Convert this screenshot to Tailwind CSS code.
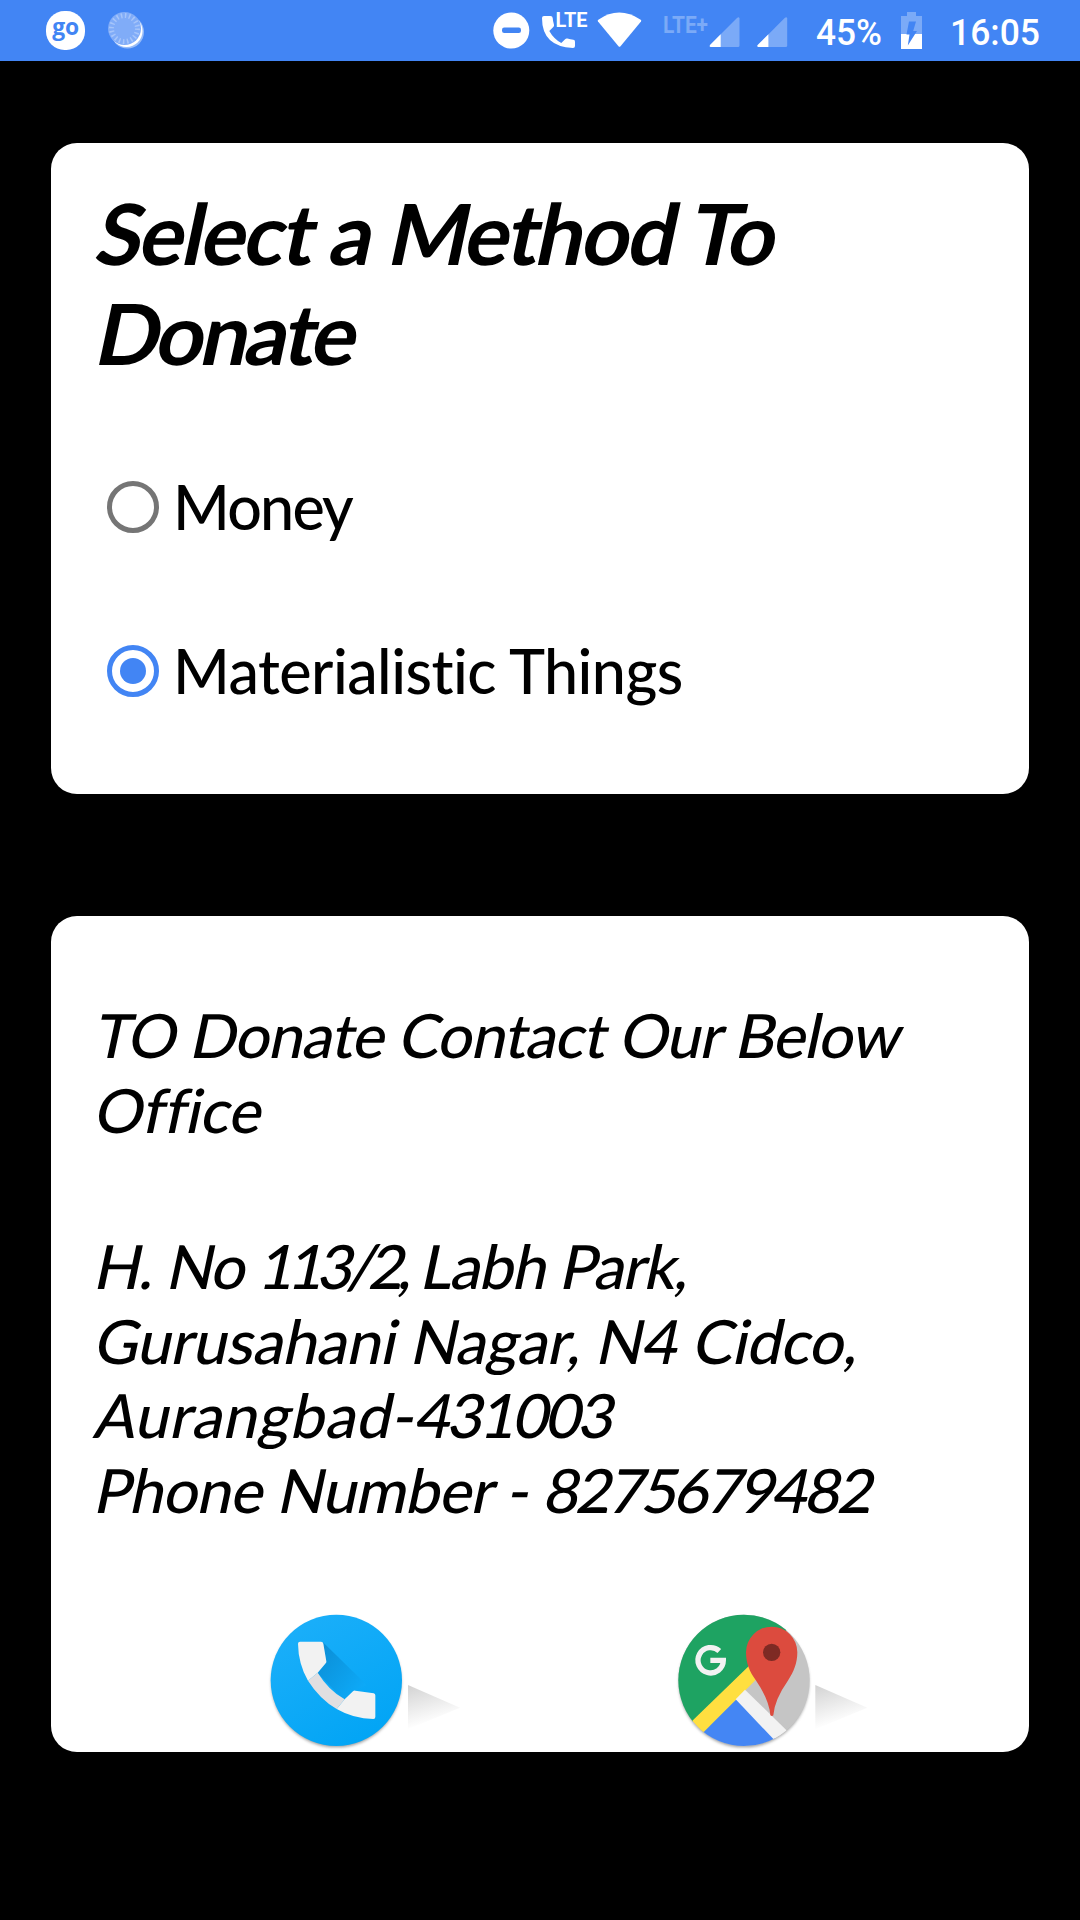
<!DOCTYPE html>
<html lang="en">
<head>
<meta charset="utf-8">
<title>Donate</title>
<script src="https://cdn.jsdelivr.net/npm/@tailwindcss/browser@4"></script>
</head>
<body class="w-[1080px] h-[1920px] overflow-hidden bg-black text-black font-['Lato',sans-serif]">
<header class="h-[61px] bg-[#4285f4]">
<svg class="block" width="1080" height="61" viewBox="0 0 1080 61" fill="#fff">
  <!-- notifications -->
  <rect x="46" y="11" width="39" height="39" rx="18.5"/>
  <text x="65.7" y="34.5" text-anchor="middle" font-family="Open Sans, sans-serif" font-weight="700" font-size="23" textLength="27" lengthAdjust="spacingAndGlyphs" fill="#4285f4">go</text>
  <circle cx="127.5" cy="32" r="16.5" opacity=".45"/>
  <circle cx="126.5" cy="31" r="16"/>
  <circle cx="124.5" cy="28.5" r="16.5" fill="#80acf8"/>
  <circle cx="124.5" cy="28.5" r="13" fill="none" stroke="#a6c5fa" stroke-width="5" stroke-dasharray="1.5 2.584"/>
  <!-- do not disturb -->
  <circle cx="511.3" cy="30.5" r="18"/>
  <rect x="502" y="27.5" width="19" height="5.5" rx="2.2" fill="#4285f4"/>
  <!-- call over LTE -->
  <path d="M544 16h6.500q2 0 2.200 2 .2 3.500 1.300 6.800.3 1.300-.7 2.300l-4 4q4.500 8 12 12l3.800-3.900q1-1 2.300-.6 3 1 6 1.200 1.600.2 1.600 2V46q0 2-2 2Q542 46.500 542 18q0-2 2-2Z"/>
  <text x="555.5" y="27" font-family="Roboto, sans-serif" font-weight="700" font-size="19.5" textLength="32" lengthAdjust="spacingAndGlyphs">LTE</text>
  <path d="M598 21.500q-.8-1 .3-1.800Q619 5.500 640.700 19.700q1 .8.300 1.800L620.500 46.200q-1 1.200-2 0Z"/>
  <!-- mobile signal -->
  <text x="663" y="32.7" font-family="Roboto, sans-serif" font-weight="700" font-size="24" textLength="45" lengthAdjust="spacingAndGlyphs" fill="#7baaf7">LTE+</text>
  <path d="M710.500 47q-1.500-.5-.5-2L737 18q2-1.500 2.500.5V45.500q0 1.500-1.500 1.500Z" fill="#7baaf7"/>
  <path d="M710.500 47q-1.500-.5-.5-2L720.700 34.300V47Z"/>
  <path d="M758.200 47q-1.500-.5-.5-2L784.700 18q2-1.500 2.500.5V45.500q0 1.500-1.500 1.500Z" fill="#7baaf7"/>
  <path d="M758.200 47q-1.500-.5-.5-2L768.400 34.300V47Z"/>
  <text x="816" y="45" font-family="Roboto, sans-serif" font-weight="500" font-size="36" textLength="66" lengthAdjust="spacingAndGlyphs">45%</text>
  <!-- battery -->
  <path d="M901 16h6v-4h9v4h6v18h-21Z" fill="#7baaf7"/>
  <path d="M901 34h21v15h-21Z"/>
  <path d="M909 21.500h7l-2.800 9.500h3.800L907.800 45.500 909.500 34.500H906.500Z" fill="#4285f4"/>
  <text x="950" y="45" font-family="Roboto, sans-serif" font-weight="500" font-size="36" textLength="90" lengthAdjust="spacingAndGlyphs">16:05</text>
</svg>
</header>
<main class="px-[51px] pt-[82px] flex flex-col gap-[122px]">
  <section class="h-[651px] rounded-[26px] bg-white pl-[46px] pt-[40px]">
    <h1 class="pl-[2px] font-bold text-[84.5px] leading-[100px] whitespace-nowrap">
      <span class="block w-fit -skew-x-12 tracking-[-2.3px]">Select a Method To</span>
      <span class="block w-fit -skew-x-12 tracking-[-3.5px]">Donate</span>
    </h1>
    <div class="mt-[84px] ml-[10px] text-[61px] font-medium">
      <label class="flex h-[164px] items-start">
        <span class="mt-[14px] size-[52px] rounded-full border-[5px] border-[#757575]"></span>
        <span class="ml-[14px] leading-[80px] tracking-[-1.8px]">Money</span>
      </label>
      <label class="flex items-start">
        <span class="mt-[14px] size-[52px] rounded-full border-[5px] border-[#4285f4] flex items-center justify-center"><span class="size-[26px] rounded-full bg-[#4285f4]"></span></span>
        <span class="ml-[14px] leading-[80px] tracking-[-0.55px] [font-variant-ligatures:none]">Materialistic Things</span>
      </label>
    </div>
  </section>
  <section class="h-[836px] rounded-[26px] bg-white overflow-hidden pt-[82px]">
    <div class="pl-[46px] text-[61px] font-medium leading-[74.5px] whitespace-nowrap [font-variant-ligatures:none]">
      <p>
        <span class="block w-fit -skew-x-12 tracking-[-0.85px]">TO Donate Contact Our Below</span>
        <span class="block w-fit -skew-x-12">Office</span>
      </p>
      <address class="not-italic mt-[82px]">
        <span class="block w-fit -skew-x-12 tracking-[-1.3px]">H. No <span class="tracking-[-5.9px]">113/2,</span> Labh Park,</span>
        <span class="block w-fit -skew-x-12 tracking-[-0.35px]">Gurusahani Nagar, N4 Cidco,</span>
        <span class="block w-fit -skew-x-12 tracking-[0.6px]">Aurangbad-<span class="tracking-[-2.7px]">431003</span></span>
        <span class="block w-fit -skew-x-12 tracking-[-0.65px]">Phone Number - <span class="tracking-[-2.7px]">8275679482</span></span>
      </address>
    </div>
    <div class="mt-[63px] ml-[199px] flex gap-[167px]">
      <svg width="240" height="162" viewBox="0 0 720 486">
        <defs>
          <linearGradient id="wedge" x1="0" y1="0" x2=".35" y2="1"><stop offset="0" stop-color="#d2d2d2"/><stop offset=".9" stop-color="#fff"/></linearGradient>
          <linearGradient id="sky" x1="0" y1="0" x2=".6" y2="1"><stop offset="0" stop-color="#1eb0fa"/><stop offset="1" stop-color="#03a5f5"/></linearGradient>
          <linearGradient id="cast" gradientUnits="userSpaceOnUse" x1="210" y1="190" x2="340" y2="290"><stop offset="0" stop-color="#0c90d8"/><stop offset="1" stop-color="#0da9f7"/></linearGradient>
          <filter id="soft" x="-10%" y="-10%" width="120%" height="120%"><feGaussianBlur stdDeviation="5"/></filter>
        </defs>
        <path d="M474 285 630 353 474 418Z" fill="url(#wedge)"/>
        <circle cx="259" cy="277" r="195" fill="#777" opacity=".7" filter="url(#soft)"/>
        <circle cx="259" cy="271" r="197" fill="url(#sky)"/>
        <path d="M219 157 350 285 312 303 282 330 203 250 229 217Z" fill="url(#cast)"/>
        <path d="M174 272 203 248Q236 301 284 328L260 357Q209 327 174 272Z" fill="#e1dfe1"/>
        <path d="M150 155H213Q219 155 220 161L229 214Q230 217 227 220L203 248 174 272Q145 222 144 161 144 155 150 155Z" fill="#f2f2f2"/>
        <path d="M284 328 309 304Q312 301 316 302L371 310Q376 311 376 316V381Q376 387 370 387 310 386 260 357Z" fill="#f2f2f2"/>
      </svg>
      <svg width="240" height="162" viewBox="0 0 720 486">
        <defs><clipPath id="disc"><circle cx="261" cy="271" r="197"/></clipPath></defs>
        <path d="M475 285 631 353 475 418Z" fill="url(#wedge)"/>
        <circle cx="261" cy="277" r="195" fill="#777" opacity=".7" filter="url(#soft)"/>
        <g clip-path="url(#disc)">
          <path d="M60 70H470V480H60Z" fill="#c5c5c5"/>
          <path d="M60 70H440L60 440Z" fill="#1ea362"/>
          <path d="M238 328 380 470H90Z" fill="#4486f4"/>
          <path d="M106 392 278 226 304 262 138 428Z" fill="#ffdf40"/>
          <path d="M236 328 264 299 390 422 352 450Z" fill="#f2f2f2"/>
        </g>
        <path d="M340 376Q337 330 296 270C278 245 267 220 267 187A77 77 0 0 1 421 187C421 220 410 245 394 270Q352 330 349 376Q345 380 340 376Z" fill="#dc4b3e"/>
        <circle cx="344" cy="187" r="26" fill="#7e2a24"/>
        <path d="M187 183A38 38 0 1 0 199 211H160" fill="none" stroke="#f2f2f2" stroke-width="16"/>
      </svg>
    </div>
  </section>
</main>
</body>
</html>
